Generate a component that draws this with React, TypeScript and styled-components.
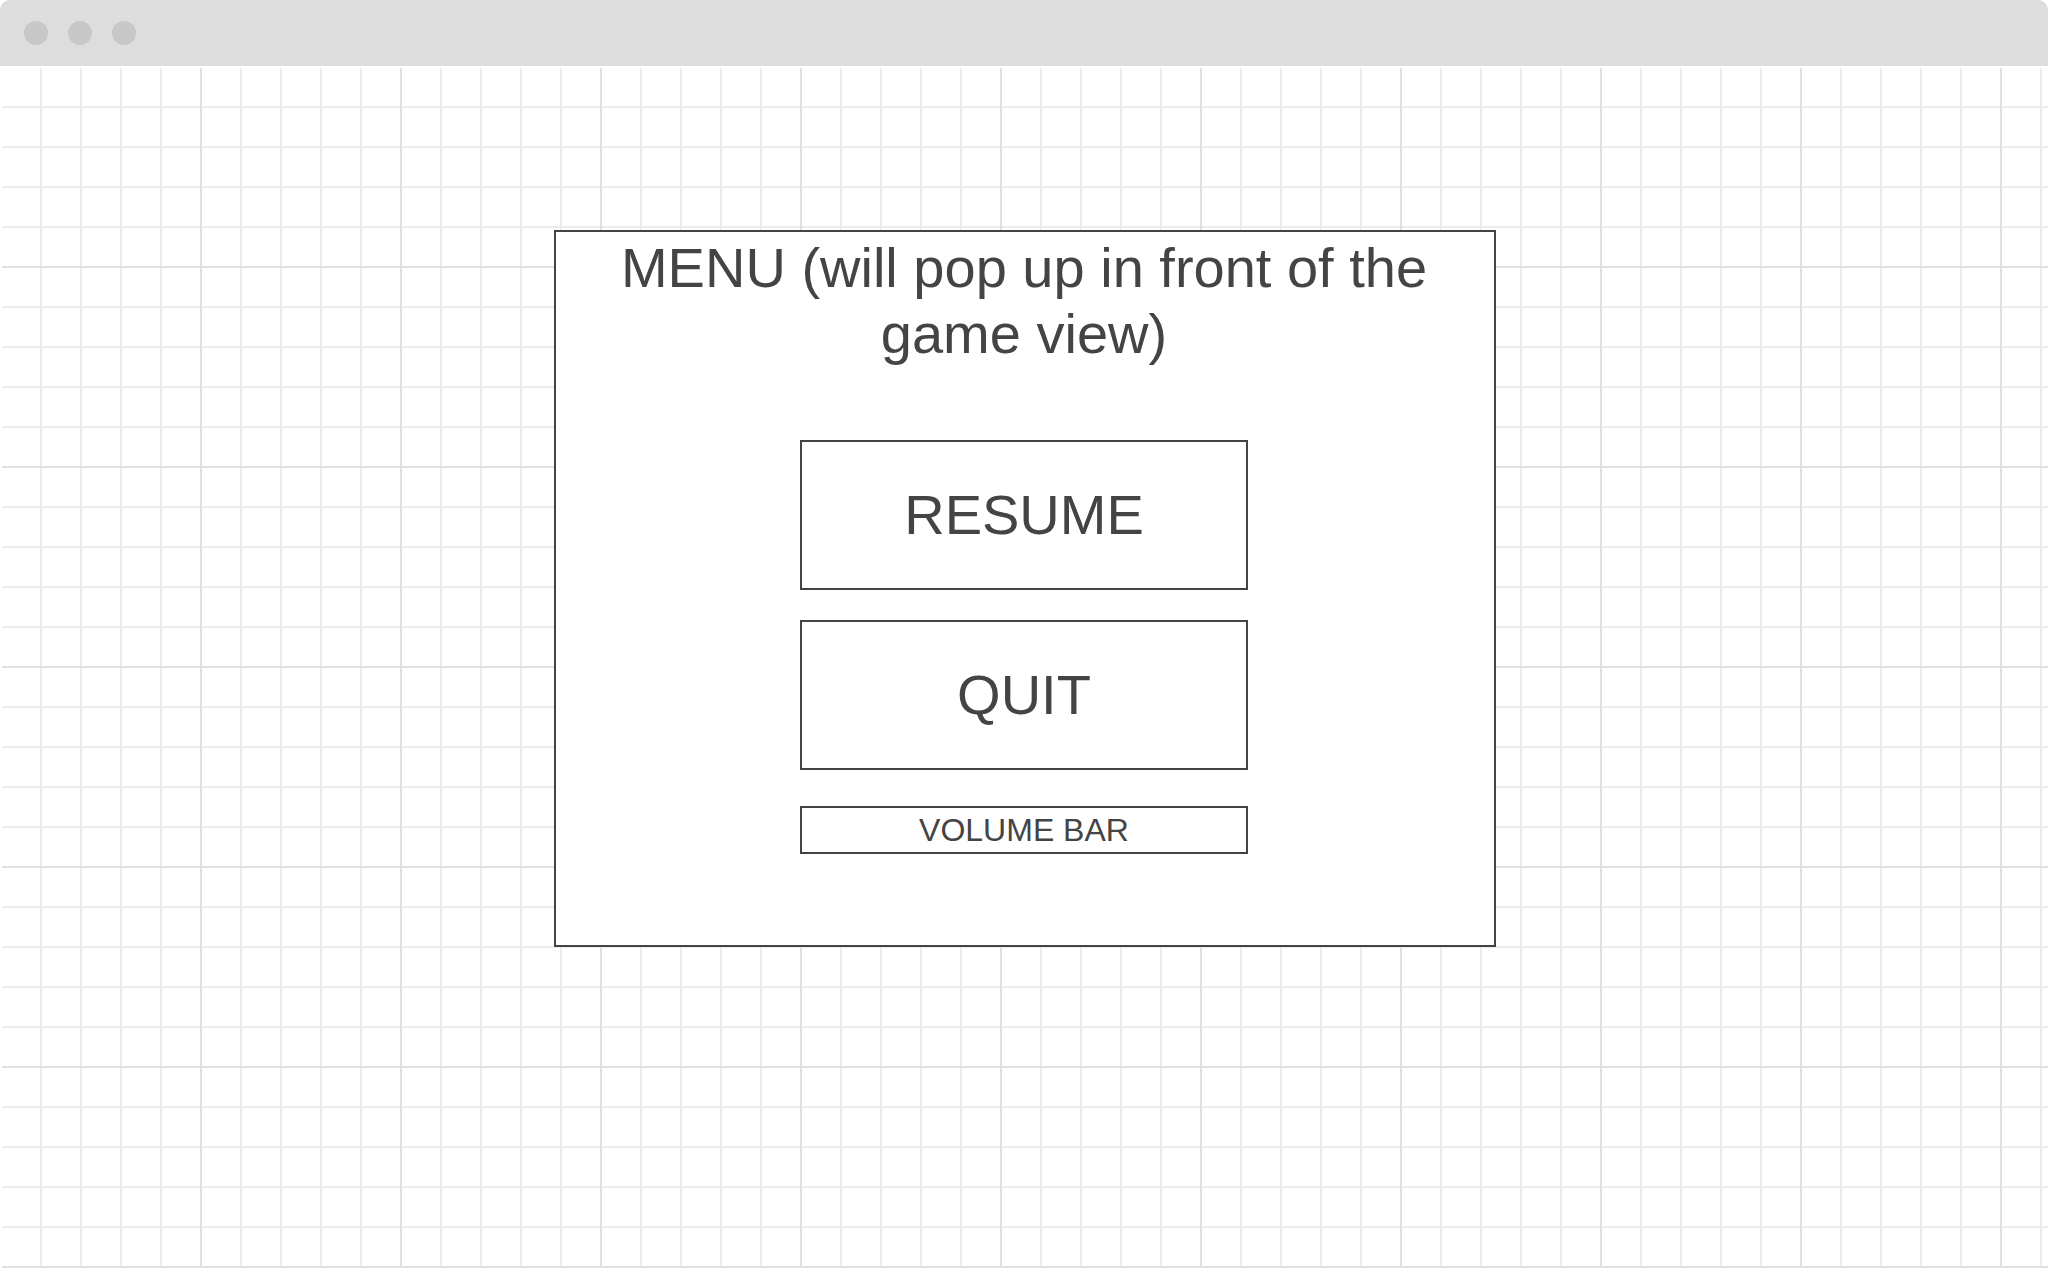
import React from "react";
import styled, { createGlobalStyle } from "styled-components";

const GlobalStyle = createGlobalStyle`
  html, body {
    margin: 0;
    padding: 0;
    background: #ffffff;
  }
  body {
    font-family: "Liberation Sans", Arial, sans-serif;
  }
`;

const Page = styled.div`
  width: 2048px;
  height: 1268px;
  display: flex;
  flex-direction: column;
  overflow: hidden;
  background: #ffffff;
`;

const TitleBar = styled.div`
  height: 66px;
  flex: none;
  background: #dddddd;
  border-radius: 10px 10px 0 0;
  display: flex;
  align-items: center;
  gap: 20px;
  padding-left: 24px;
`;

const Dot = styled.span`
  width: 24px;
  height: 24px;
  border-radius: 50%;
  background: #c8c8c8;
`;

const Canvas = styled.div`
  flex: 1;
  margin-top: 2px;
  margin-left: 2px;
  padding-top: 162px;
  padding-left: 552px;
  background-color: #ffffff;
  background-image:
    linear-gradient(to right, #e0e0e0 2px, transparent 2px),
    linear-gradient(to bottom, #e0e0e0 2px, transparent 2px),
    linear-gradient(to right, #ececec 2px, transparent 2px),
    linear-gradient(to bottom, #ececec 2px, transparent 2px);
  background-size: 200px 200px, 200px 200px, 40px 40px, 40px 40px;
  background-position: 198px 198px, 198px 198px, 38px 38px, 38px 38px;
`;

const MenuPanel = styled.div`
  width: 942px;
  height: 717px;
  box-sizing: border-box;
  border: 2px solid #444444;
  background: #ffffff;
  display: flex;
  flex-direction: column;
  align-items: center;
  padding-top: 3px;
  padding-right: 2px;
  color: #444444;
`;

const MenuTitle = styled.div`
  max-width: 880px;
  font-size: 56px;
  line-height: 66px;
  text-align: center;
`;

const MenuButton = styled.div<{ $small?: boolean; $gap: number }>`
  width: 448px;
  height: ${(p) => (p.$small ? 48 : 150)}px;
  box-sizing: border-box;
  border: 2px solid #444444;
  margin-top: ${(p) => p.$gap}px;
  display: flex;
  align-items: center;
  justify-content: center;
  font-size: ${(p) => (p.$small ? 32 : 56)}px;
  line-height: 1;
  color: #444444;
`;

export default function App() {
  return (
    <>
      <GlobalStyle />
      <Page>
        <TitleBar>
          <Dot />
          <Dot />
          <Dot />
        </TitleBar>
        <Canvas>
          <MenuPanel>
            <MenuTitle>MENU (will pop up in front of the game view)</MenuTitle>
            <MenuButton $gap={73}>RESUME</MenuButton>
            <MenuButton $gap={30}>QUIT</MenuButton>
            <MenuButton $gap={36} $small>
              VOLUME BAR
            </MenuButton>
          </MenuPanel>
        </Canvas>
      </Page>
    </>
  );
}
